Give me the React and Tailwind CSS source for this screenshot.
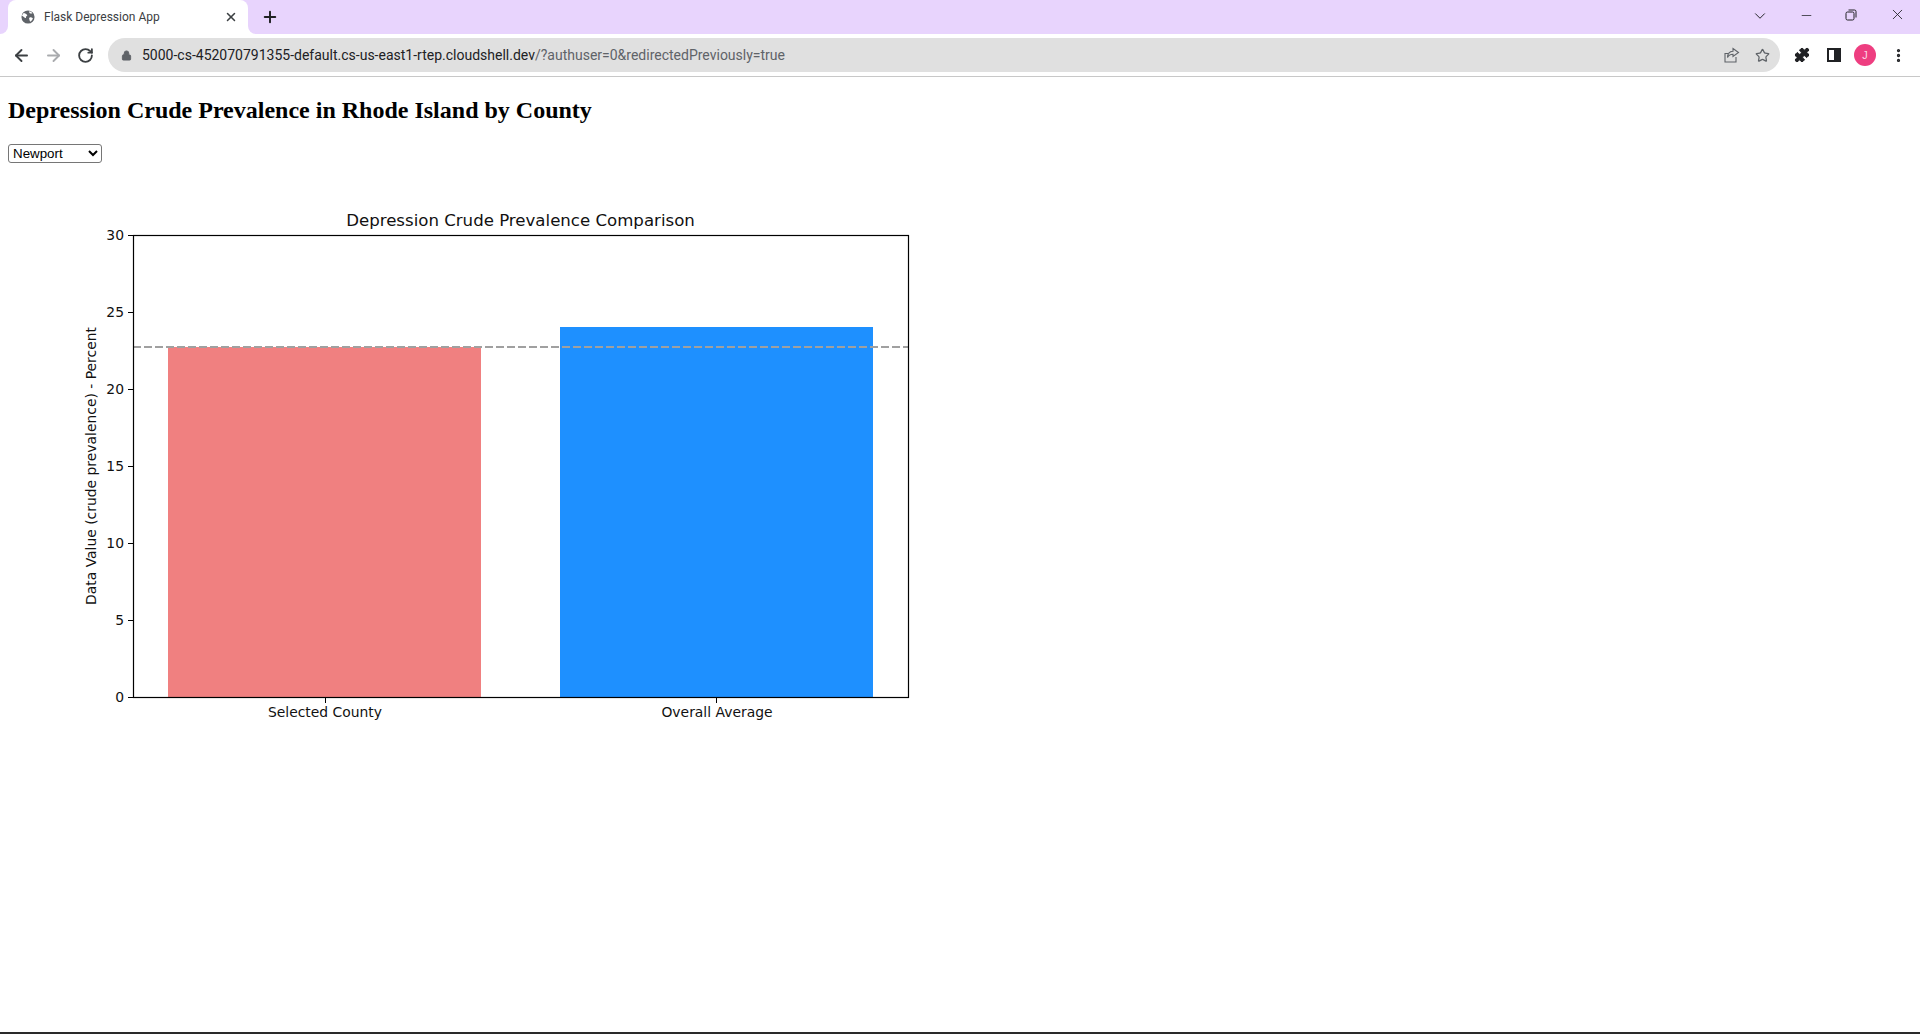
import { ChevronDown, Minus, X, Plus, ArrowLeft, ArrowRight, RotateCw, Lock, Star, Puzzle, EllipsisVertical } from 'lucide-react';

const yTicks = [
  { label: '30', y: 235 },
  { label: '25', y: 312 },
  { label: '20', y: 389 },
  { label: '15', y: 466 },
  { label: '10', y: 543 },
  { label: '5', y: 620 },
  { label: '0', y: 697 },
];

// svg origin sits at page (0, 190)
function Chart() {
  const top = -190;
  return (
    <svg width="960" height="540" viewBox="0 0 960 540" className="block -ml-2" style={{ fontFamily: '"DejaVu Sans", sans-serif' }}>
      <g transform={`translate(0 ${top})`}>
        <rect x="168" y="347" width="313" height="350" fill="#f08080" />
        <rect x="560" y="327" width="313" height="370" fill="#1e90ff" />
        <line x1="133" y1="347" x2="908" y2="347" stroke="#a0a0a0" strokeWidth="1.8" strokeDasharray="8 3" />
        <rect x="133.5" y="235.5" width="775" height="462" fill="none" stroke="#000" strokeWidth="1.2" />
        {yTicks.map((t) => (
          <g key={t.label}>
            <line x1="128" y1={t.y + 0.5} x2="133" y2={t.y + 0.5} stroke="#000" strokeWidth="1" />
            <text x="124" y={t.y + 5} textAnchor="end" fontSize="13.9" fill="#111">{t.label}</text>
          </g>
        ))}
        <line x1="325.5" y1="697" x2="325.5" y2="703" stroke="#000" />
        <line x1="716.5" y1="697" x2="716.5" y2="703" stroke="#000" />
        <text x="325" y="717" textAnchor="middle" fontSize="13.9" fill="#111">Selected County</text>
        <text x="717" y="717" textAnchor="middle" fontSize="13.9" fill="#111">Overall Average</text>
        <text x="520.5" y="226" textAnchor="middle" fontSize="16.6" fill="#111">Depression Crude Prevalence Comparison</text>
        <text transform="translate(96 466) rotate(-90)" textAnchor="middle" fontSize="13.9" fill="#111">Data Value (crude prevalence) - Percent</text>
      </g>
    </svg>
  );
}

function Tab() {
  return (
    <div className="relative ml-2 flex h-[34px] w-[240px] items-center rounded-t-lg bg-white pl-[13px] pr-[10px]">
      <span className="absolute bottom-0 left-[-8px] h-2 w-2 bg-white">
        <span className="block h-2 w-2 rounded-br-lg bg-[#e8d4fd]" />
      </span>
      <span className="absolute bottom-0 right-[-8px] h-2 w-2 bg-white">
        <span className="block h-2 w-2 rounded-bl-lg bg-[#e8d4fd]" />
      </span>
      <svg width="14" height="14" viewBox="0 0 16 16" className="mr-[9px] shrink-0">
        <circle cx="8" cy="8" r="7.5" fill="#5f6368" />
        <path d="M3 3.500c2 .2 3 1 4 2.200.6.8-.6 1.200-1.200 1.800-.4.5.2 1.200-.3 1.700-.7.4-1.500-.8-2.200-1.200L1 6.400zM10 8.500c1.200-.3 2.700.3 3.600 1-.4 1.500-1.500 3-3 3.800-.9-.5-.6-1.700-1.100-2.600-.4-.9-.3-2 .5-2.200zM9.500 1.500c1.500.2 2.800 1.100 3.600 2.200-1 .6-2.200.5-3 .1-.7-.5-1-1.500-.6-2.300z" fill="#fff" />
      </svg>
      <span className="flex-1 truncate text-[12px] text-[#3c4043]" style={{ fontFamily: '"Roboto", "Open Sans", sans-serif' }}>Flask Depression App</span>
      <X size={14} strokeWidth={2.6} className="text-[#3c4043]" />
    </div>
  );
}

export default function App() {
  return (
    <div className="flex h-[1034px] flex-col overflow-hidden bg-white" style={{ fontFamily: '"Liberation Sans", sans-serif' }}>
      <div className="flex h-[34px] items-center bg-[#e8d4fd]">
        <Tab />
        <Plus size={18} strokeWidth={2.6} className="ml-[13px] text-[#202124]" />
        <div className="ml-auto flex items-center text-[#202124]">
          <ChevronDown size={18} strokeWidth={1.3} className="mr-[30px] -mt-[3px]" />
          <Minus size={15} strokeWidth={1.2} className="mr-[31px] -mt-[3px]" />
          <svg width="12" height="12" viewBox="0 0 12 12" fill="none" stroke="#202124" strokeWidth="1" className="mr-[32px] -mt-[5px]">
            <rect x="1" y="3" width="8" height="8" rx="1.500" />
            <path d="M3.500 1h6a1.500 1.500 0 0 1 1.500 1.500v6" />
          </svg>
          <X size={17} strokeWidth={1.2} className="mr-[14px] -mt-[5px]" />
        </div>
      </div>

      <div className="flex h-[43px] items-center border-b border-[#c8c8c8] bg-white">
        <ArrowLeft size={19} strokeWidth={2.4} className="ml-[12px] text-[#3c4043]" />
        <ArrowRight size={19} strokeWidth={2.4} className="ml-[13px] text-[#a9abae]" />
        <RotateCw size={17} strokeWidth={2.6} className="ml-[14px] text-[#3c4043]" />
        <div className="ml-[14px] flex h-[34px] w-[1672px] items-center rounded-full bg-[#e0e0e0] pl-[13px] pr-[10px]">
          <Lock size={11} fill="#5f6368" strokeWidth={2} className="text-[#5f6368]" />
          <div className="ml-[10px] flex-1 text-[14px] text-[#202124]" style={{ fontFamily: '"Roboto", "Open Sans", sans-serif' }}>
            5000-cs-452070791355-default.cs-us-east1-rtep.cloudshell.dev<span className="text-[#5f6368]">/?authuser=0&amp;redirectedPreviously=true</span>
          </div>
          <svg width="17" height="17" viewBox="0 0 17 17" fill="none" stroke="#5f6368" strokeWidth="1.1" className="mr-[15px]">
            <path d="M13 10v5H2V6.500h3" />
            <path d="M10 1.500l5.500 4-5.500 4V7.200c-2.500 0-4.500 1-5.500 3.300 0-3.500 2-6 5.500-6.300z" />
          </svg>
          <Star size={15} strokeWidth={2} className="text-[#5f6368]" />
        </div>
        <Puzzle size={16} fill="#202124" strokeWidth={1.500} className="ml-[14px] text-[#202124]" />
        <div className="ml-[17px] flex h-[14px] w-[14px] justify-end border-2 border-[#202124] bg-white">
          <div className="h-full w-[5px] bg-[#202124]" />
        </div>
        <div className="ml-[13px] flex h-[22px] w-[22px] items-center justify-center rounded-full bg-[#ee3e80] text-[11px] text-[#fbd5e3]">J</div>
        <EllipsisVertical size={17} strokeWidth={2.6} className="ml-[14px] text-[#202124]" />
      </div>

      <main className="flex-1 px-2">
        <h1 className="mt-[20px] text-[24px] font-bold leading-[27px] text-black" style={{ fontFamily: '"Liberation Serif", serif' }}>
          Depression Crude Prevalence in Rhode Island by County
        </h1>
        <select defaultValue="Newport" className="mt-[20px] block h-[19px] w-[94px] rounded-[3px] border border-[#767676] bg-white text-[13.333px] leading-none text-black">
          <option>Newport</option>
          <option>Bristol</option>
          <option>Kent</option>
          <option>Providence</option>
          <option>Washington</option>
        </select>
        <div className="mt-[27px]">
          <Chart />
        </div>
      </main>

      <div className="h-[2px] bg-[#2a2a2a]" />
    </div>
  );
}
